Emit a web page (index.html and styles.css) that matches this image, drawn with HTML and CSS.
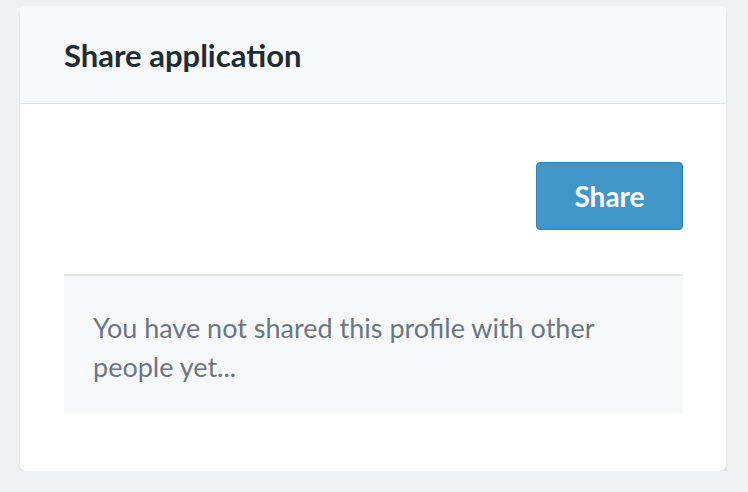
FILE: index.html
```html
<!DOCTYPE html>
<html>
<head>
<meta charset="utf-8">
<link rel="stylesheet" href="styles.css">
</head>
<body>
<div class="card">
  <div class="card-header">
    <h2 class="title">Share application</h2>
  </div>
  <div class="card-body">
    <div class="actions">
      <button class="btn">Share</button>
    </div>
    <div class="empty">
      <p class="empty-text">You have not shared this profile with other people yet...</p>
    </div>
  </div>
</div>
</body>
</html>
```
FILE: styles.css
```css
html, body {
  margin: 0;
  padding: 0;
}
body {
  background: #eff0f2;
  font-family: Lato, "Open Sans", sans-serif;
  padding: 6px 22px 0 20px;
}
.card {
  background: #ffffff;
  border-radius: 6px;
  box-shadow: 0 3px 3px rgba(0, 0, 0, 0.1);
  overflow: hidden;
}
.card-header {
  background: #f7f8fa;
  border-bottom: 1px solid #e1e4e8;
  height: 97px;
  display: flex;
  align-items: center;
  padding: 0 44px;
}
.title {
  margin: 0;
  font-size: 31px;
  font-weight: 700;
  color: #1f2c33;
  position: relative;
  top: 0px;
}
.card-body {
  padding: 58px 43px 57px 44px;
}
.actions {
  display: flex;
  justify-content: flex-end;
}
.btn {
  width: 147px;
  height: 68px;
  background: #4196ca;
  border: 1px solid #357fb0;
  border-radius: 4px;
  color: #ffffff;
  font-family: Lato, "Open Sans", sans-serif;
  font-size: 28px;
  font-weight: 700;
  padding: 0;
}
.empty {
  margin-top: 44px;
  background: #f7f8fa;
  border-top: 2px solid #e1e3e6;
  height: 138px;
  padding: 0 29px;
}
.empty-text {
  margin: 0;
  padding-top: 32px;
  font-size: 27px;
  line-height: 39px;
  color: #6c7683;
  max-width: 540px;
}
```
